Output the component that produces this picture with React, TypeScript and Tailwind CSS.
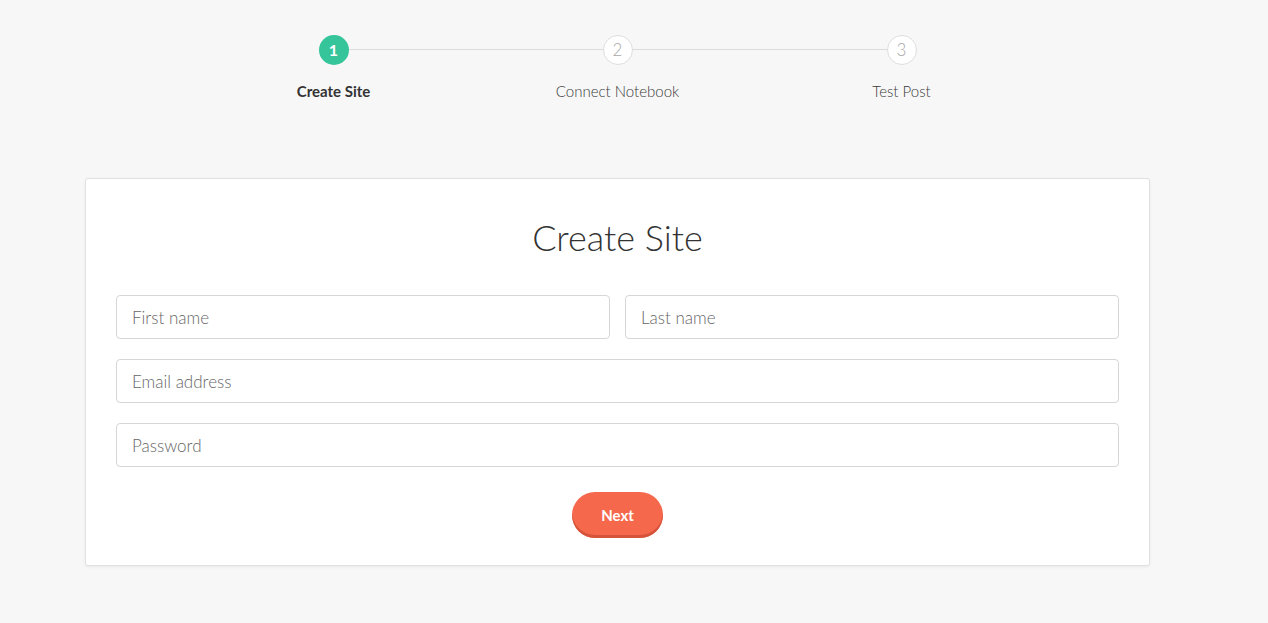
import React from 'react';

const steps = ['Create Site', 'Connect Notebook', 'Test Post'];

const Stepper: React.FC<{ active: number }> = ({ active }) => {
  return (
    <div className="relative mx-auto flex w-[852px]">
      {/* connector line */}
      <div className="absolute left-[157px] right-[157px] top-[49px] h-px bg-[#dcdcdc]" />
      {steps.map((label, i) => {
        const isActive = i === active;
        return (
          <div key={label} className="relative flex w-[284px] flex-col items-center pt-[35px]">
            <div
              className={
                isActive
                  ? 'flex h-[30px] w-[30px] items-center justify-center rounded-full bg-[#36c49b] text-[16px] font-bold text-white'
                  : 'flex h-[30px] w-[30px] items-center justify-center rounded-full border border-[#dedede] bg-white text-[17px] font-light text-[#a8a8a8]'
              }
            >
              {i + 1}
            </div>
            <span
              className={
                isActive
                  ? 'mt-[15px] text-[15px] font-bold leading-[22px] text-[#333]'
                  : 'mt-[15px] text-[15px] font-light leading-[22px] text-[#3a3a3a]'
              }
            >
              {label}
            </span>
          </div>
        );
      })}
    </div>
  );
};

const Field: React.FC<{ placeholder: string; type?: string }> = ({ placeholder, type = 'text' }) => (
  <input
    type={type}
    placeholder={placeholder}
    className="h-[44px] w-full rounded-[4px] border border-[#d6d6d6] bg-white px-[15px] text-[17px] font-light text-[#333] outline-none placeholder:text-[#666]"
  />
);

export default function App() {
  return (
    <div className="min-h-[623px] bg-[#f7f7f7] font-['Lato','Liberation_Sans',sans-serif]">
      <div className="w-[1235px]">
        <Stepper active={0} />

        <div className="ml-[85px] mt-[76px] w-[1065px] rounded-[3px] border border-[#e1e1e1] bg-white px-[30px] pb-[27px] pt-[34px] shadow-[0_1px_3px_rgba(0,0,0,0.06)]">
          <h1 className="text-center text-[36px] font-light leading-[48px] text-[#333]">Create Site</h1>

          <div className="mt-[34px] flex flex-col gap-[20px]">
            <div className="flex gap-[15px]">
              <Field placeholder="First name" />
              <Field placeholder="Last name" />
            </div>
            <Field placeholder="Email address" type="email" />
            <Field placeholder="Password" type="password" />
          </div>

          <div className="mt-[25px] flex justify-center">
            <button className="h-[46px] w-[91px] rounded-full bg-[#f5684b] text-[15px] font-bold text-white shadow-[inset_0_-3px_0_#d4533a]">
              Next
            </button>
          </div>
        </div>
      </div>
    </div>
  );
}
